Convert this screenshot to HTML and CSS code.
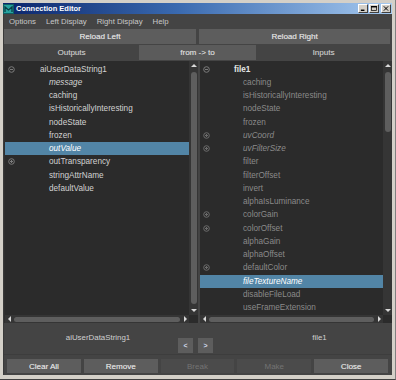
FILE: index.html
```html
<!DOCTYPE html>
<html>
<head>
<meta charset="utf-8">
<title>Connection Editor</title>
<link rel="stylesheet" href="styles.css">
</head>
<body>
<div class="window">
  <div class="titlebar">
    <svg class="app-icon" width="11" height="10" viewBox="0 0 11 10">
      <rect x="0" y="0" width="11" height="10" fill="#0f5f63"/>
      <rect x="1" y="1" width="9" height="8" fill="#27a3a0"/>
      <path d="M2 8 L2 3 L5.5 6 L9 3 L9 8" fill="none" stroke="#0b3f45" stroke-width="1.3"/>
    </svg>
    <span class="title">Connection Editor</span>
    <div class="win-btns">
      <span class="wbtn"><svg width="8" height="7" viewBox="0 0 8 7"><rect x="1" y="5" width="5" height="2" fill="#000"/></svg></span>
      <span class="wbtn"><svg width="8" height="7" viewBox="0 0 8 7"><rect x="0.5" y="0.5" width="7" height="6" fill="none" stroke="#000"/><rect x="0" y="0" width="8" height="2" fill="#000"/></svg></span>
      <span class="wbtn close"><svg width="8" height="7" viewBox="0 0 8 7"><path d="M1 0.5 L7 6.5 M7 0.5 L1 6.5" stroke="#000" stroke-width="1.4"/></svg></span>
    </div>
  </div>
  <div class="client">
    <div class="menubar">
      <span>Options</span><span>Left Display</span><span>Right Display</span><span>Help</span>
    </div>
    <div class="reload-row">
      <div class="btn">Reload Left</div>
      <div class="btn">Reload Right</div>
    </div>
    <div class="tab-row">
      <div class="tab">Outputs</div>
      <div class="tab active">from -&gt; to</div>
      <div class="tab">Inputs</div>
    </div>
    <div class="lists">
      <div class="list left">
        <div class="list-body">
          <div class="row"><span class="tog"><svg width="7" height="7" viewBox="0 0 7 7"><circle cx="3.5" cy="3.5" r="2.8" fill="none" stroke="#7c7c7c"/><path d="M2 3.5 H5" stroke="#7c7c7c"/></svg></span><span class="label root">aiUserDataString1</span></div>
          <div class="row"><span class="tog"></span><span class="label child italic">message</span></div>
          <div class="row"><span class="tog"></span><span class="label child">caching</span></div>
          <div class="row"><span class="tog"></span><span class="label child">isHistoricallyInteresting</span></div>
          <div class="row"><span class="tog"></span><span class="label child">nodeState</span></div>
          <div class="row"><span class="tog"></span><span class="label child">frozen</span></div>
          <div class="row selected"><span class="tog"></span><span class="label child italic">outValue</span></div>
          <div class="row"><span class="tog"><svg width="7" height="7" viewBox="0 0 7 7"><circle cx="3.5" cy="3.5" r="2.8" fill="none" stroke="#7c7c7c"/><path d="M2 3.5 H5 M3.5 2 V5" stroke="#7c7c7c"/></svg></span><span class="label child">outTransparency</span></div>
          <div class="row"><span class="tog"></span><span class="label child">stringAttrName</span></div>
          <div class="row"><span class="tog"></span><span class="label child">defaultValue</span></div>
        </div>
        <div class="vscroll">
          <div class="varrow"><span class="tri-up"></span></div>
          <div class="vtrack"><div class="vthumb full"></div></div>
          <div class="varrow"><span class="tri-down"></span></div>
        </div>
        <div class="hscroll">
          <div class="harrow"><span class="tri-left"></span></div>
          <div class="htrack"><div class="hthumb"></div></div>
          <div class="harrow"><span class="tri-right"></span></div>
        </div>
        <div class="corner"></div>
      </div>
      <div class="list right">
        <div class="list-body">
          <div class="row"><span class="tog"><svg width="7" height="7" viewBox="0 0 7 7"><circle cx="3.5" cy="3.5" r="2.8" fill="none" stroke="#7c7c7c"/><path d="M2 3.5 H5" stroke="#7c7c7c"/></svg></span><span class="label root bright">file1</span></div>
          <div class="row"><span class="tog"></span><span class="label child dim">caching</span></div>
          <div class="row"><span class="tog"></span><span class="label child dim">isHistoricallyInteresting</span></div>
          <div class="row"><span class="tog"></span><span class="label child dim">nodeState</span></div>
          <div class="row"><span class="tog"></span><span class="label child dim">frozen</span></div>
          <div class="row"><span class="tog"><svg width="7" height="7" viewBox="0 0 7 7"><circle cx="3.5" cy="3.5" r="2.8" fill="none" stroke="#6c6c6c"/><path d="M2 3.5 H5 M3.5 2 V5" stroke="#6c6c6c"/></svg></span><span class="label child dim italic">uvCoord</span></div>
          <div class="row"><span class="tog"><svg width="7" height="7" viewBox="0 0 7 7"><circle cx="3.5" cy="3.5" r="2.8" fill="none" stroke="#6c6c6c"/><path d="M2 3.5 H5 M3.5 2 V5" stroke="#6c6c6c"/></svg></span><span class="label child dim italic">uvFilterSize</span></div>
          <div class="row"><span class="tog"></span><span class="label child dim">filter</span></div>
          <div class="row"><span class="tog"></span><span class="label child dim">filterOffset</span></div>
          <div class="row"><span class="tog"></span><span class="label child dim">invert</span></div>
          <div class="row"><span class="tog"></span><span class="label child dim">alphaIsLuminance</span></div>
          <div class="row"><span class="tog"><svg width="7" height="7" viewBox="0 0 7 7"><circle cx="3.5" cy="3.5" r="2.8" fill="none" stroke="#6c6c6c"/><path d="M2 3.5 H5 M3.5 2 V5" stroke="#6c6c6c"/></svg></span><span class="label child dim">colorGain</span></div>
          <div class="row"><span class="tog"><svg width="7" height="7" viewBox="0 0 7 7"><circle cx="3.5" cy="3.5" r="2.8" fill="none" stroke="#6c6c6c"/><path d="M2 3.5 H5 M3.5 2 V5" stroke="#6c6c6c"/></svg></span><span class="label child dim">colorOffset</span></div>
          <div class="row"><span class="tog"></span><span class="label child dim">alphaGain</span></div>
          <div class="row"><span class="tog"></span><span class="label child dim">alphaOffset</span></div>
          <div class="row"><span class="tog"><svg width="7" height="7" viewBox="0 0 7 7"><circle cx="3.5" cy="3.5" r="2.8" fill="none" stroke="#6c6c6c"/><path d="M2 3.5 H5 M3.5 2 V5" stroke="#6c6c6c"/></svg></span><span class="label child dim">defaultColor</span></div>
          <div class="row selected"><span class="tog"></span><span class="label child italic">fileTextureName</span></div>
          <div class="row"><span class="tog"></span><span class="label child dim">disableFileLoad</span></div>
          <div class="row"><span class="tog"></span><span class="label child dim">useFrameExtension</span></div>
        </div>
        <div class="vscroll">
          <div class="varrow"><span class="tri-up"></span></div>
          <div class="vtrack"><div class="vthumb short"></div></div>
          <div class="varrow"><span class="tri-down"></span></div>
        </div>
        <div class="hscroll">
          <div class="harrow"><span class="tri-left"></span></div>
          <div class="htrack"><div class="hthumb"></div></div>
          <div class="harrow"><span class="tri-right"></span></div>
        </div>
        <div class="corner"></div>
      </div>
    </div>
    <div class="label-row">
      <div class="node-label left">aiUserDataString1</div>
      <div class="swap-btns">
        <div class="small-btn">&lt;</div>
        <div class="small-btn">&gt;</div>
      </div>
      <div class="node-label right">file1</div>
    </div>
    <div class="footer">
      <div class="btn">Clear All</div>
      <div class="btn">Remove</div>
      <div class="btn disabled">Break</div>
      <div class="btn disabled">Make</div>
      <div class="btn">Close</div>
    </div>
  </div>
</div>
</body>
</html>
```

FILE: styles.css
```css
* { box-sizing: border-box; margin: 0; padding: 0; }

body {
  margin: 0;
  background: #d4d0c8;
  font-family: "Liberation Sans", Arial, sans-serif;
  font-size: 8px;
}

.window {
  width: 396px;
  height: 380px;
  display: flex;
  flex-direction: column;
  padding: 3px 3px 5px 3px;
  background: #d4d0c8;
  border-right: 1px solid #808080;
  border-bottom: 1px solid #404040;
}

.titlebar {
  height: 11px;
  display: flex;
  align-items: center;
  background: linear-gradient(to right, #0a246a 0%, #3a6ab0 45%, #a6caf0 100%);
  flex: none;
}

.app-icon { display: block; flex: none; }

.title {
  margin-left: 2px;
  color: #ffffff;
  font-weight: bold;
  font-size: 7.5px;
  line-height: 11px;
}

.win-btns {
  margin-left: auto;
  display: flex;
  gap: 1px;
  margin-right: 1px;
}

.wbtn {
  width: 10px;
  height: 9px;
  background: #d4d0c8;
  border-top: 1px solid #ffffff;
  border-left: 1px solid #ffffff;
  border-right: 1px solid #404040;
  border-bottom: 1px solid #404040;
  display: flex;
  align-items: center;
  justify-content: center;
}

.wbtn svg { display: block; width: 6px; height: 5px; }
.wbtn.close { margin-left: 1px; }

.client {
  flex: 1;
  background: #444444;
  border-left: 1px solid #3a3a3a;
  display: flex;
  flex-direction: column;
  color: #c8c8c8;
}

.menubar {
  height: 15px;
  display: flex;
  align-items: center;
  gap: 10px;
  padding-left: 5px;
  font-size: 7.8px;
  color: #c8c8c8;
  flex: none;
}

.reload-row {
  height: 15px;
  display: grid;
  grid-template-columns: 192px 1fr;
  column-gap: 3px;
  padding-right: 2px;
  flex: none;
}

.btn {
  background: #5d5d5d;
  color: #e2e2e2;
  display: flex;
  align-items: center;
  justify-content: center;
  font-size: 8px;
  text-shadow: 0.3px 0 0 rgba(226, 226, 226, 0.55);
}

.btn.disabled {
  background: #4b4b4b;
  color: #737373;
  text-shadow: none;
}

.tab-row {
  margin-top: 1px;
  height: 15px;
  display: grid;
  grid-template-columns: 135px 117px 135px;
  flex: none;
}

.tab {
  display: flex;
  align-items: center;
  justify-content: center;
  color: #c8c8c8;
  font-size: 8px;
  text-shadow: 0.3px 0 0 rgba(200, 200, 200, 0.5);
}

.tab.active { background: #5b5b5b; color: #e0e0e0; }

.lists {
  margin-top: 1px;
  height: 262px;
  display: grid;
  grid-template-columns: 194px 1fr;
  column-gap: 2px;
  flex: none;
}

.list {
  display: grid;
  grid-template-columns: 1fr 9px;
  grid-template-rows: 1fr 8px;
  background: #2b2b2b;
  overflow: hidden;
}

.list.left { border-left: 1px solid #2f2f2f; }

.list-body {
  padding-top: 1.5px;
  overflow: hidden;
  font-size: 8.2px;
}

.row {
  height: 13.25px;
  display: flex;
  align-items: center;
  padding-left: 3px;
  white-space: nowrap;
}

.row.selected { background: #5285a6; }
.row.selected .label { color: #ffffff; }

.tog {
  width: 7px;
  height: 7px;
  flex: none;
}

.tog svg { display: block; }

.label { color: #d2d2d2; }
.label.root { margin-left: 25px; }
.label.child { margin-left: 34px; }
.label.italic { font-style: italic; }
.label.dim { color: #8a8a8a; }
.label.bright { color: #e6e6e6; font-weight: bold; }

.list.right .label.root { margin-left: 24px; }
.list.right .label.child { margin-left: 33px; }

.vscroll {
  display: flex;
  flex-direction: column;
  background: #353535;
}

.varrow {
  height: 9px;
  display: flex;
  align-items: center;
  justify-content: center;
  flex: none;
}

.tri-up {
  width: 0; height: 0;
  border-left: 3px solid transparent;
  border-right: 3px solid transparent;
  border-bottom: 3px solid #d8d8d8;
}

.tri-down {
  width: 0; height: 0;
  border-left: 3px solid transparent;
  border-right: 3px solid transparent;
  border-top: 3px solid #d8d8d8;
}

.tri-left {
  width: 0; height: 0;
  border-top: 3px solid transparent;
  border-bottom: 3px solid transparent;
  border-right: 3px solid #d8d8d8;
}

.tri-right {
  width: 0; height: 0;
  border-top: 3px solid transparent;
  border-bottom: 3px solid transparent;
  border-left: 3px solid #d8d8d8;
}

.vtrack {
  flex: 1;
  padding: 2px 1.5px;
  display: flex;
  flex-direction: column;
}

.vthumb {
  background: #5e5e5e;
  border-radius: 3px;
}

.vthumb.full { flex: 1; }
.vthumb.short { height: 60px; }

.hscroll {
  display: flex;
  background: #353535;
}

.harrow {
  width: 8px;
  display: flex;
  align-items: center;
  justify-content: center;
  flex: none;
}

.htrack {
  flex: 1;
  padding: 1.5px 1px;
  display: flex;
}

.hthumb {
  flex: 1;
  background: #5e5e5e;
  border-radius: 3px;
}

.corner { background: #2b2b2b; }

.label-row {
  height: 31px;
  display: flex;
  flex: none;
}

.node-label {
  margin-top: 10px;
  line-height: 10px;
  text-align: center;
  font-size: 7.9px;
  color: #d0d0d0;
}

.node-label.left { width: 174px; padding-left: 14px; }
.node-label.right { flex: 1; padding-left: 34px; }

.swap-btns {
  display: flex;
  gap: 5px;
  margin-top: 15px;
  height: 15px;
}

.small-btn {
  width: 15px;
  height: 15px;
  background: #5d5d5d;
  color: #d0d8e8;
  font-size: 7px;
  font-weight: bold;
  display: flex;
  align-items: center;
  justify-content: center;
}

.footer {
  height: 21px;
  padding: 4px 4px 2px 3px;
  display: grid;
  grid-template-columns: repeat(5, 1fr);
  column-gap: 3px;
  border-top: 1px solid #3d3d3d;
  flex: none;
}
```
